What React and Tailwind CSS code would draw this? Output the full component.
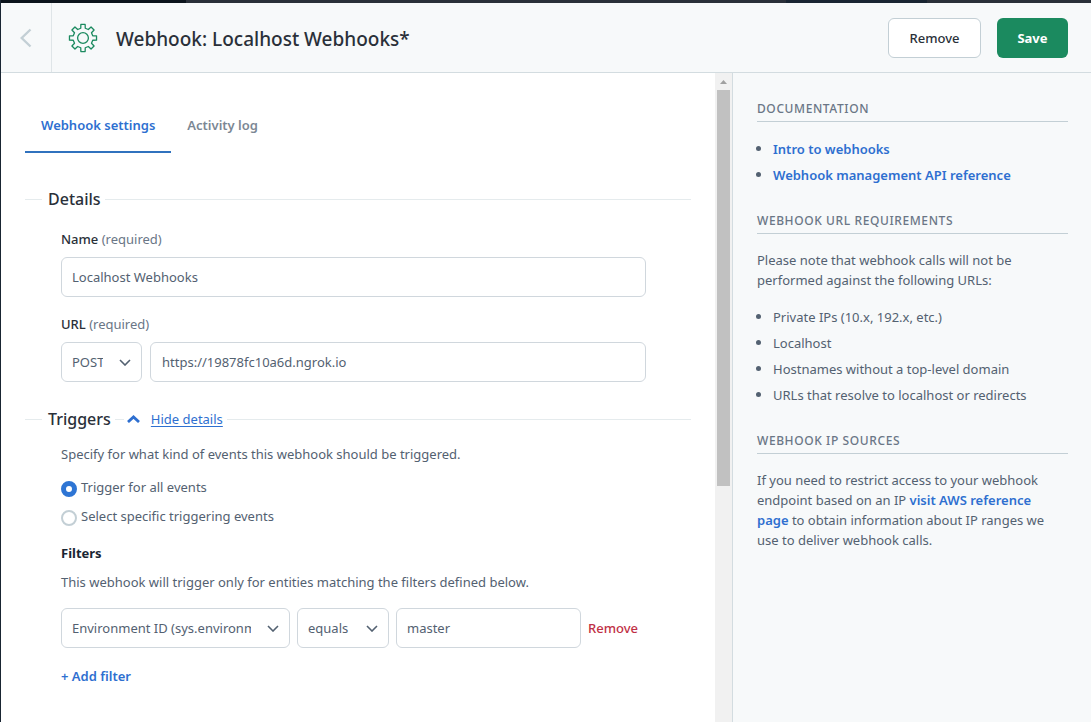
import React, { useState } from "react";

const linkClass = "font-semibold text-[#2e6fd0] hover:underline";
const fieldClass =
  "h-10 rounded-md border border-[#d0d7dd] bg-white text-[13px] leading-5 text-[#536171] outline-none focus:border-[#2e75d4]";

function GearIcon() {
  const teeth = [0, 45, 90, 135, 180, 225, 270, 315];
  const pt = (r, deg) => {
    const a = ((deg - 90) * Math.PI) / 180;
    return `${(15 + r * Math.cos(a)).toFixed(2)} ${(15 + r * Math.sin(a)).toFixed(2)}`;
  };
  const d =
    teeth
      .map(
        (t, i) =>
          `${i === 0 ? "M" : "L"}${pt(10, t - 13)} L${pt(13.7, t - 9)} L${pt(13.7, t + 9)} L${pt(10, t + 13)}`
      )
      .join(" ") + " Z";
  return (
    <svg className="size-[30px]" viewBox="0 0 30 30" fill="none" stroke="#1b8a5f" strokeWidth="1.3" strokeLinejoin="round" aria-hidden="true">
      <path d={d} />
      <circle cx="15" cy="15" r="5.4" />
    </svg>
  );
}

function Select({ label, options, className }) {
  return (
    <div className={`relative shrink-0 ${className}`}>
      <select aria-label={label} className={`${fieldClass} w-full appearance-none pl-[10px] pr-[38px]`}>
        {options.map((o) => (
          <option key={o}>{o}</option>
        ))}
      </select>
      <svg className="pointer-events-none absolute right-[11px] top-[17px] h-[7px] w-3" viewBox="0 0 12 7" fill="none" stroke="#536171" strokeWidth="1.6" aria-hidden="true">
        <path d="M1 1l5 5 5-5" />
      </svg>
    </div>
  );
}

function SectionTitle({ children, extra }) {
  return (
    <div className="flex items-center">
      <span className="mr-[6px] h-px w-[17px] bg-[#e5ebed]" />
      <h2 className="mr-1 text-base leading-6 font-medium text-[#2a3039]">{children}</h2>
      {extra}
      <span className="h-px flex-1 bg-[#e5ebed]" />
    </div>
  );
}

function FieldLabel({ htmlFor, children }) {
  return (
    <label htmlFor={htmlFor} className="block text-[#6a7686]">
      <span className="font-medium text-[#2a3039]">{children}</span> (required)
    </label>
  );
}

function Radio({ id, label, checked, onChange }) {
  return (
    <div className="flex gap-1">
      <input
        id={id}
        type="radio"
        name="trigger"
        checked={checked}
        onChange={onChange}
        className="mt-1 size-4 shrink-0 appearance-none rounded-full border-2 border-[#c3cfd5] bg-white checked:border-[5px] checked:border-[#2e75d4]"
      />
      <label htmlFor={id}>{label}</label>
    </div>
  );
}

function SideHeading({ children }) {
  return (
    <h3 className="mt-6 border-b border-[#c3cfd5] text-xs leading-6 font-medium tracking-wider text-[#6a7686] uppercase">
      {children}
    </h3>
  );
}

function Bullets({ items }) {
  return (
    <ul className="mt-[17px] flex flex-col gap-[6px]">
      {items.map((item, i) => (
        <li key={i} className="flex before:mt-[7px] before:mr-3 before:-ml-px before:size-[5px] before:shrink-0 before:rounded-full before:bg-[#536171]">
          <span>{item}</span>
        </li>
      ))}
    </ul>
  );
}

export default function App() {
  const [all, setAll] = useState(true);
  const [open, setOpen] = useState(true);
  return (
    <div className="flex min-h-screen flex-col border-l border-[#192532] bg-white font-['Noto_Sans','Open_Sans',sans-serif] text-[13px] leading-5 text-[#536171]">
      <div className="flex h-[3px] bg-[#2a3039]">
        <span className="w-[17%] bg-[#0c141c]" />
        <span className="w-[55%]" />
        <span className="w-[13%] bg-[#192532]" />
      </div>
      <header className="flex h-[70px] items-center border-b border-[#d3dce0] bg-[#f7f9fa]">
        <button type="button" aria-label="Back" className="flex h-full w-[51px] items-center justify-center border-r border-[#dfe5e8]">
          <svg className="h-5 w-3" viewBox="0 0 12 20" fill="none" stroke="#c3cfd5" strokeWidth="2.4" aria-hidden="true">
            <path d="M10.5 1.5L1.7 10l8.8 8.5" />
          </svg>
        </button>
        <span className="mr-[18px] ml-4">
          <GearIcon />
        </span>
        <h1 className="flex-1 pt-0.5 text-[19px] leading-7 font-medium text-[#2a3039]">Webhook: Localhost Webhooks*</h1>
        <button type="button" className="mr-4 h-10 w-[93px] rounded-md border border-[#c3cfd5] bg-white font-medium text-[#2a3039]">
          Remove
        </button>
        <button type="button" className="mr-[23px] h-10 w-[71px] rounded-md bg-[#1b8a5f] font-bold text-white">
          Save
        </button>
      </header>

      <div className="flex flex-1">
        <main className="min-w-0 flex-1 pt-[26px] pr-6 pb-[35px] pl-6">
          <nav className="flex" role="tablist">
            <button type="button" role="tab" aria-selected="true" className="h-[54px] border-b-2 border-[#3072be] px-4 font-semibold text-[#2e6fd0]">
              Webhook settings
            </button>
            <button type="button" role="tab" aria-selected="false" className="h-[54px] border-b-2 border-transparent px-4 font-semibold text-[#7c8794]">
              Activity log
            </button>
          </nav>

          <section className="mt-[34px]">
            <SectionTitle>Details</SectionTitle>
            <div className="mt-[18px] mr-[45px] ml-9">
              <FieldLabel htmlFor="name">Name</FieldLabel>
              <input id="name" type="text" defaultValue="Localhost Webhooks" className={`${fieldClass} mt-2 w-full px-[10px]`} />
              <div className="mt-[17px]">
                <FieldLabel htmlFor="url">URL</FieldLabel>
              </div>
              <div className="mt-2 flex gap-2">
                <Select label="HTTP method" options={["POST", "GET", "PUT", "DELETE"]} className="w-[81px]" />
                <input id="url" type="text" defaultValue="https://19878fc10a6d.ngrok.io" className={`${fieldClass} min-w-0 flex-1 px-[11px]`} />
              </div>
            </div>
          </section>

          <section className="mt-[25px]">
            <SectionTitle
              extra={
                <>
                  <span className="mr-[3px] h-px w-[9px] bg-[#e5ebed]" />
                  <button type="button" onClick={() => setOpen(!open)} className="mr-1 flex items-center gap-[11px] text-[#2e6fd0]">
                    <svg className="h-2 w-[13px]" viewBox="0 0 13 8" fill="none" stroke="#2e6fd0" strokeWidth="2.8" aria-hidden="true">
                      <path d="M1 7l5.5-5L12 7" />
                    </svg>
                    <span className="underline underline-offset-2">Hide details</span>
                  </button>
                </>
              }
            >
              Triggers
            </SectionTitle>
            {open && (
              <div className="mt-[13px] ml-9">
                <p>Specify for what kind of events this webhook should be triggered.</p>
                <div className="mt-[13px] flex flex-col gap-[9px]">
                  <Radio id="all" label="Trigger for all events" checked={all} onChange={() => setAll(true)} />
                  <Radio id="specific" label="Select specific triggering events" checked={!all} onChange={() => setAll(false)} />
                </div>
                <h3 className="mt-[17px] font-bold text-[#192532]">Filters</h3>
                <p className="mt-[9px]">This webhook will trigger only for entities matching the filters defined below.</p>
                <div className="mt-4 flex items-center gap-[7px]">
                  <Select label="Filter property" options={["Environment ID (sys.environment.sys.id)", "Content type ID (sys.contentType.sys.id)", "Entity ID (sys.id)"]} className="w-[229px]" />
                  <Select label="Filter operator" options={["equals", "in", "not in"]} className="w-[92px]" />
                  <input aria-label="Filter value" type="text" defaultValue="master" className={`${fieldClass} w-[185px] px-[10px]`} />
                  <button type="button" className="font-medium text-[#bf3045]">Remove</button>
                </div>
                <button type="button" className="mt-[18px] font-semibold text-[#2e6fd0]">+ Add filter</button>
              </div>
            )}
          </section>
        </main>

        <div className="flex w-[17px] shrink-0 flex-col bg-[#f1f1f1] px-[2px]" aria-hidden="true">
          <span className="flex h-[17px] shrink-0 items-center justify-center">
            <svg className="h-1 w-[7px]" viewBox="0 0 7 4" fill="#a0a0a0">
              <path d="M0 4L3.5 0 7 4z" />
            </svg>
          </span>
          <span className="grow-[396] basis-0 bg-[#c1c1c1]" />
          <span className="grow-[236] basis-0" />
        </div>

        <aside className="w-[359px] shrink-0 border-l border-[#d3dce0] bg-[#f7f9fa] pr-[23px] pl-6">
          <SideHeading>Documentation</SideHeading>
          <Bullets
            items={[
              <a href="#intro" className={linkClass}>Intro to webhooks</a>,
              <a href="#api" className={linkClass}>Webhook management API reference</a>,
            ]}
          />
          <SideHeading>Webhook URL requirements</SideHeading>
          <p className="mt-4 pr-4">Please note that webhook calls will not be performed against the following URLs:</p>
          <Bullets
            items={[
              "Private IPs (10.x, 192.x, etc.)",
              "Localhost",
              "Hostnames without a top-level domain",
              "URLs that resolve to localhost or redirects",
            ]}
          />
          <SideHeading>Webhook IP sources</SideHeading>
          <p className="mt-4 pr-4">
            If you need to restrict access to your webhook endpoint based on an IP{" "}
            <a href="#aws" className={linkClass}>visit AWS reference page</a> to obtain information about IP ranges we use to deliver webhook calls.
          </p>
        </aside>
      </div>
    </div>
  );
}
